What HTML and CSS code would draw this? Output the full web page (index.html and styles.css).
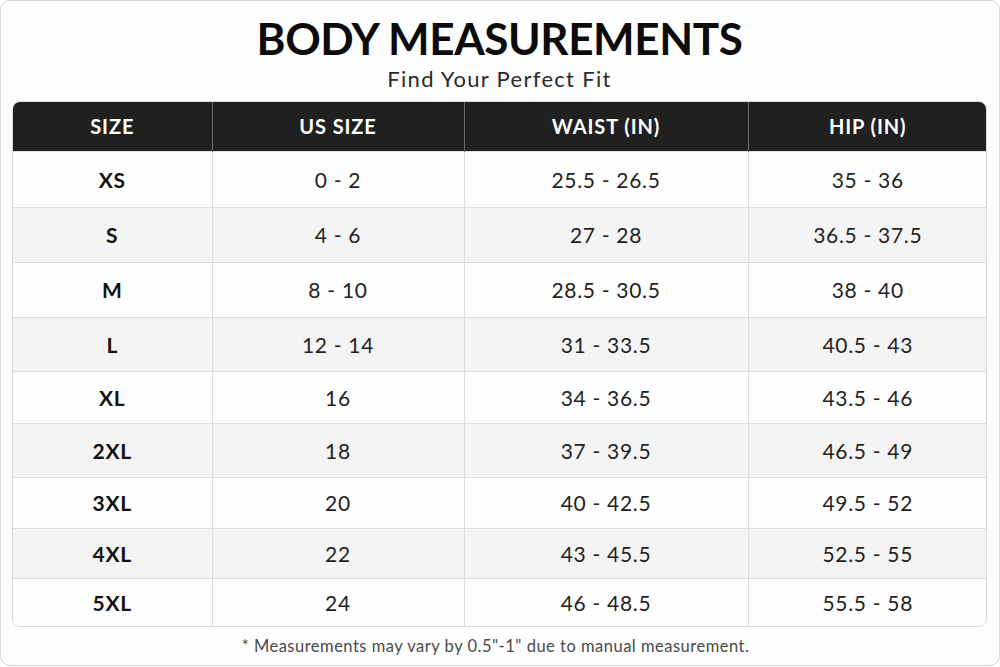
FILE: index.html
```html
<!DOCTYPE html>
<html lang="en">
<head>
<meta charset="utf-8">
<title>Body Measurements</title>
<link rel="stylesheet" href="styles.css">
</head>
<body>
<div class="card">
  <h1 class="title">BODY MEASUREMENTS</h1>
  <p class="subtitle">Find Your Perfect Fit</p>
  <div class="table-wrap">
    <table class="chart">
      <colgroup>
        <col class="c1"><col class="c2"><col class="c3"><col class="c4">
      </colgroup>
      <thead>
        <tr><th>SIZE</th><th>US SIZE</th><th>WAIST (IN)</th><th>HIP (IN)</th></tr>
      </thead>
      <tbody>
        <tr><td class="sz">XS</td><td>0 - 2</td><td>25.5 - 26.5</td><td>35 - 36</td></tr>
        <tr><td class="sz">S</td><td>4 - 6</td><td>27 - 28</td><td>36.5 - 37.5</td></tr>
        <tr><td class="sz">M</td><td>8 - 10</td><td>28.5 - 30.5</td><td>38 - 40</td></tr>
        <tr><td class="sz">L</td><td>12 - 14</td><td>31 - 33.5</td><td>40.5 - 43</td></tr>
        <tr><td class="sz">XL</td><td>16</td><td>34 - 36.5</td><td>43.5 - 46</td></tr>
        <tr><td class="sz">2XL</td><td>18</td><td>37 - 39.5</td><td>46.5 - 49</td></tr>
        <tr><td class="sz">3XL</td><td>20</td><td>40 - 42.5</td><td>49.5 - 52</td></tr>
        <tr><td class="sz">4XL</td><td>22</td><td>43 - 45.5</td><td>52.5 - 55</td></tr>
        <tr><td class="sz">5XL</td><td>24</td><td>46 - 48.5</td><td>55.5 - 58</td></tr>
      </tbody>
    </table>
  </div>
  <p class="note">* Measurements may vary by 0.5"-1" due to manual measurement.</p>
</div>
</body>
</html>
```

FILE: styles.css
```css
* { box-sizing: border-box; }
html, body { margin: 0; padding: 0; background: #fff; }
body {
  font-family: Lato, "Open Sans", "Liberation Sans", sans-serif;
  color: #1e1e1e;
}
.card {
  width: 1000px;
  height: 666px;
  border: 1px solid #d6d6d6;
  border-radius: 10px;
  padding: 9px 12px 0 11px;
  background: #fefefe;
  display: flex;
  flex-direction: column;
}
.title {
  margin: 0;
  text-align: center;
  font-size: 44px;
  line-height: 56px;
  font-weight: 700;
  color: #0b0b0b;
  letter-spacing: -0.4px;
}
.subtitle {
  margin: -1px 0 9px;
  text-align: center;
  font-size: 22px;
  line-height: 27px;
  font-weight: 400;
  color: #2a2a2a;
  letter-spacing: 1.3px;
}
.table-wrap {
  border: 1px solid #d9d9d9;
  border-radius: 8px;
  overflow: hidden;
}
.chart {
  width: 100%;
  border-collapse: collapse;
  table-layout: fixed;
}
.c1 { width: 199px; }
.c2 { width: 252px; }
.c3 { width: 284px; }
.c4 { width: 239px; }
.chart th {
  background: #202020;
  color: #fff;
  height: 49px;
  font-size: 20px;
  font-weight: 700;
  letter-spacing: 0.9px;
  text-align: center;
  border-left: 1px solid #6a6a6a;
  padding: 0;
}
.chart th:first-child, .chart td:first-child { border-left: 0; }
.chart td {
  text-align: center;
  font-size: 21px;
  font-weight: 400;
  color: #1f1f1f;
  letter-spacing: 0.7px;
  border-left: 1px solid #dcdcdc;
  border-top: 1px solid #dedede;
  padding: 0;
}
.chart td.sz { font-weight: 700; color: #111; letter-spacing: 0.8px; }
.chart tbody tr:nth-child(even) td { background: #f4f4f4; }
.chart tbody tr:nth-child(odd) td { background: #fefefe; }
.chart tbody tr:nth-child(1) { height: 56px; }
.chart tbody tr:nth-child(2) { height: 55px; }
.chart tbody tr:nth-child(3) { height: 55px; }
.chart tbody tr:nth-child(4) { height: 54px; }
.chart tbody tr:nth-child(5) { height: 52px; }
.chart tbody tr:nth-child(6) { height: 54px; }
.chart tbody tr:nth-child(7) { height: 51px; }
.chart tbody tr:nth-child(8) { height: 50px; }
.chart tbody tr:nth-child(9) { height: 48px; }
.note {
  margin: 10px 8px 0 0;
  text-align: center;
  font-size: 16.5px;
  line-height: 19px;
  color: #4a4a4a;
  letter-spacing: 0.5px;
}
```
